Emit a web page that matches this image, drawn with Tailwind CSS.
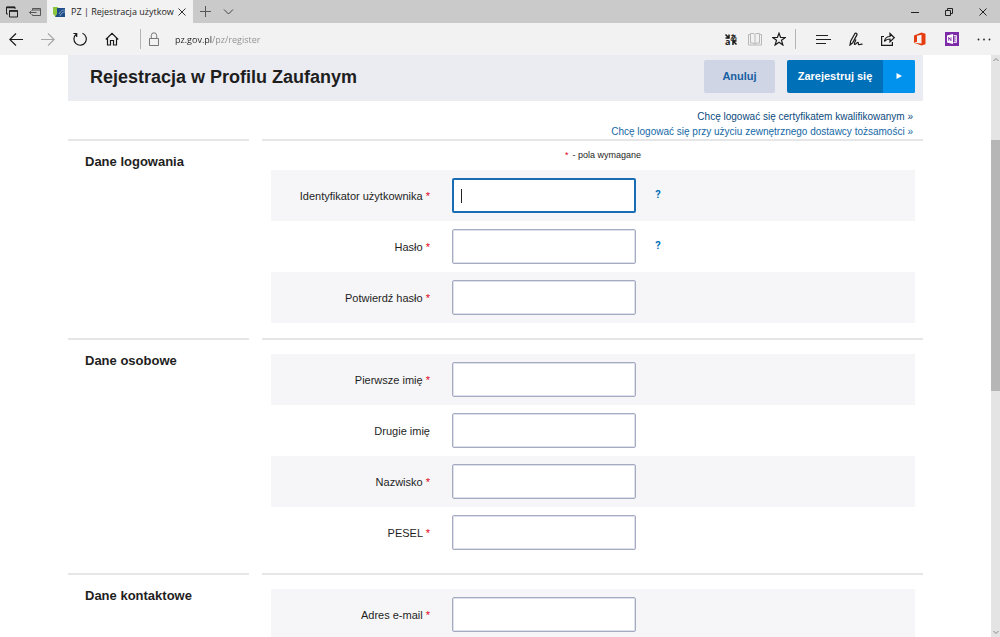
<!DOCTYPE html>
<html lang="pl">
<head>
    <meta charset="UTF-8">
    <meta name="viewport" content="width=device-width, initial-scale=1.0">
    <title>PZ | Rejestracja użytkownika</title>
    <script src="https://cdn.jsdelivr.net/npm/@tailwindcss/browser@4"></script>
</head>
<body class="h-screen flex flex-col overflow-hidden bg-white text-[#1e1e1e] font-['Liberation_Sans',Arial,sans-serif]">

<!-- Tab strip -->
<div class="h-[23px] shrink-0 flex items-stretch bg-[#cacaca] font-['Open_Sans','Noto_Sans',sans-serif]">
    <button class="w-[23px] flex items-center justify-center" aria-label="Odłożone karty">
        <svg class="w-3 h-3" viewBox="0 0 12 12" fill="none" stroke="#222"><path d="M2 8H.5V1h8.500v2"/><path d="M.5 1.500h8.500" stroke-width="1.500"/><path d="M3.500 4.500h8v6.500h-8z"/><path d="M3.500 5h8" stroke-width="1.700"/></svg>
    </button>
    <button class="w-6 flex items-center justify-center" aria-label="Odłóż karty">
        <svg class="w-3 h-3" viewBox="0 0 12 12" fill="none" stroke="#555"><path d="M3.500 4.500v-2h8v7h-8V8.500M3.500 4h8M.5 6.500h7M2.500 4.500l-2 2 2 2"/></svg>
    </button>
    <div class="w-[146px] flex items-center bg-[#f2f2f2] pl-1.5">
        <svg class="w-3 h-3 shrink-0" viewBox="0 0 12 12"><path d="M0 1h5v5L3 11 0 8z" fill="#8cc63e"/><path d="M4 2h8v9H2l2-3z" fill="#1f4e86"/><path d="M6 8c2-4 4-4 6-4M7 10c1-3 3-4 5-4" fill="none" stroke="#7ea3c8"/></svg>
        <span class="ml-1.5 w-[100px] whitespace-nowrap text-[9px] leading-4">PZ | Rejestracja użytkow</span>
        <button class="flex-1 h-full flex items-center justify-center" aria-label="Zamknij kartę">
            <svg class="w-2 h-2" viewBox="0 0 8 8" fill="none" stroke="#333"><path d="M.5.5l7 7M7.500.5l-7 7"/></svg>
        </button>
    </div>
    <button class="w-6 flex items-center justify-center" aria-label="Nowa karta">
        <svg class="w-[11px] h-[11px]" viewBox="0 0 11 11" fill="none" stroke="#555"><path d="M5.500 0v11M0 5.500h11"/></svg>
    </button>
    <button class="w-[23px] flex items-center justify-center" aria-label="Podgląd kart">
        <svg class="w-[11px] h-[11px]" viewBox="0 0 11 11" fill="none" stroke="#444"><path d="M1 3.500l4.500 4.500L10 3.500"/></svg>
    </button>
    <div class="flex-1"></div>
    <button class="w-[34px] flex items-center justify-center" aria-label="Minimalizuj">
        <svg class="w-2 h-2" viewBox="0 0 8 8" stroke="#222"><path d="M0 4.500h8"/></svg>
    </button>
    <button class="w-[34px] flex items-center justify-center" aria-label="Przywróć">
        <svg class="w-2 h-2" viewBox="0 0 8 8" fill="none" stroke="#222"><path d="M.5 2.500h5v5h-5zM2.500 2.500v-2h5v5h-2"/></svg>
    </button>
    <button class="w-[34px] flex items-center justify-center" aria-label="Zamknij">
        <svg class="w-2 h-2" viewBox="0 0 8 8" fill="none" stroke="#222"><path d="M.5.5l7 7M7.500.5l-7 7"/></svg>
    </button>
</div>

<!-- Toolbar -->
<div class="h-8 shrink-0 flex items-center bg-[#f2f2f2] font-['Open_Sans','Noto_Sans',sans-serif]">
    <button class="w-8 h-8 flex items-center justify-center" aria-label="Wstecz">
        <svg class="w-3.5 h-3.5" viewBox="0 0 14 14" fill="none" stroke="#1a1a1a" stroke-width="1.200"><path d="M14 7.500H.8M7 1.500l-6.200 6 6.200 6"/></svg>
    </button>
    <button class="w-8 h-8 flex items-center justify-center" aria-label="Dalej">
        <svg class="w-3.5 h-3.5" viewBox="0 0 14 14" fill="none" stroke="#a8a8a8" stroke-width="1.200"><path d="M0 7.500h13.200M7 1.500l6.200 6-6.200 6"/></svg>
    </button>
    <button class="w-8 h-8 flex items-center justify-center" aria-label="Odśwież">
        <svg class="w-3.5 h-3.5" viewBox="0 0 14 14" fill="none" stroke="#1a1a1a" stroke-width="1.200"><path d="M9.500 1.300A6.200 6.200 0 1 1 3.200 2.200M3.700 5V1.500H.4"/></svg>
    </button>
    <button class="w-8 h-8 flex items-center justify-center" aria-label="Strona główna">
        <svg class="w-3.5 h-3.5" viewBox="0 0 14 14" fill="none" stroke="#1a1a1a" stroke-width="1.200"><path d="M.8 7.500L7 1.300l6.200 6.200M2.500 6v7h3V8.500h3V13h3V6"/></svg>
    </button>
    <div class="w-px h-5 ml-3 bg-[#b5b5b5]"></div>
    <svg class="w-3.5 h-3.5 ml-1.5" viewBox="0 0 14 14" fill="none" stroke="#777"><path d="M2.500 6.500h9v7h-9zM4.300 6.500V3.500a2.700 2.700 0 0 1 5.400 0v3"/></svg>
    <input type="text" aria-label="Adres" value="pz.gov.pl/pz/register" class="ml-3.5 flex-1 min-w-0 h-6 text-[9px] outline-none text-transparent bg-clip-text bg-linear-to-r from-[#222] from-[37px] to-[#8c8c8c] to-[37px]">
    <button class="w-6 h-8 flex items-center justify-center" aria-label="Tłumacz">
        <svg class="w-3.5 h-3.5" viewBox="0 0 14 14" fill="none" stroke="#1a1a1a"><text x="1" y="13" font-size="9" font-weight="700" fill="#1a1a1a" stroke="none">a</text><text x="6" y="7.500" font-size="7" font-weight="700" font-family="Noto Sans CJK JP" fill="#1a1a1a" stroke="none">あ</text><path d="M1.500 2.500l3 3M5 2.500v3.500H1.500M12.500 12.500l-3-3M9 13V9h3.500" stroke-width="1.500"/></svg>
    </button>
    <button class="w-6 h-8 flex items-center justify-center" aria-label="Widok do czytania">
        <svg class="w-3.5 h-3.5" viewBox="0 0 14 14" fill="none" stroke="#b8b8b8"><path d="M7 2.500v10M2.500 1.500H5a2 2 0 0 1 2 1 2 2 0 0 1 2-1h2.500v9.500H9l-2 1-2-1H2.500zM2.500 2.500h-2v10.500h13V2.500h-2"/></svg>
    </button>
    <button class="w-6 h-8 flex items-center justify-center" aria-label="Dodaj do ulubionych">
        <svg class="w-3.5 h-3.5" viewBox="0 0 14 14" fill="none" stroke="#1a1a1a" stroke-width="1.200"><path d="M7 1.200l1.600 4.300h4.700L9.500 8.300l1.400 4.700L7 10.200 3.100 13l1.400-4.700L.7 5.500h4.700z"/></svg>
    </button>
    <div class="w-px h-5 ml-1 mr-3 bg-[#b5b5b5]"></div>
    <button class="w-8 h-8 flex items-center justify-center" aria-label="Centrum">
        <svg class="w-4 h-3.5" viewBox="0 0 16 14" fill="none" stroke="#222"><path d="M0 3.500h12M0 7.500h15M0 11.500h10"/></svg>
    </button>
    <button class="w-8 h-8 flex items-center justify-center" aria-label="Dodaj notatki">
        <svg class="w-3.5 h-3.5" viewBox="0 0 14 14" fill="none" stroke="#1a1a1a" stroke-width="1.200"><path d="M1 13l.6-3.800L5.800 1.700c.8-1.200 2.700-.2 2.100 1.200L3.700 10.800zM7 7.500c-1 2-1.800 4-1.500 4.800 1 .8 2.500-2.300 3.500-2 .9.300-.3 2 .8 2.300 1 .3 1.500-.8 3.700-.3"/></svg>
    </button>
    <button class="w-8 h-8 flex items-center justify-center" aria-label="Udostępnij">
        <svg class="w-3.5 h-3.5" viewBox="0 0 14 14" fill="none" stroke="#1a1a1a" stroke-width="1.200"><path d="M3 4.500H.6v8.900h10.800V10M3.500 9.500C4 6 6.500 4.500 9 4.500V1.500l4.300 4.200L9 9.800V7C6.500 7 5 7.500 3.500 9.500z"/></svg>
    </button>
    <button class="w-8 h-8 flex items-center justify-center" aria-label="Office">
        <svg class="w-3.5 h-3.5" viewBox="0 0 14 14"><path d="M1 3.500L8.500.5l4 1.200v10.600l-4 1.200L1 10.800l7.500.8V2.700L4 3.800v6L1 10.800z" fill="#e53c10"/></svg>
    </button>
    <button class="w-8 h-8 flex items-center justify-center" aria-label="OneNote">
        <svg class="w-3.5 h-3.5" viewBox="0 0 14 14"><path d="M0 0h14v14H0z" fill="#7d2ba8"/><path d="M2 3.500L8 2v10L2 10.500z" fill="#fff"/><path d="M8.500 3.500h3v7h-3M10 3.500v7M10 6h1.500M10 8.300h1.500" fill="none" stroke="#fff" stroke-width=".8"/><path d="M3.700 8.700V5.300l2.300 3.400V5.300" fill="none" stroke="#7d2ba8" stroke-width=".9"/></svg>
    </button>
    <button class="w-8 h-8 flex items-center justify-center" aria-label="Więcej">
        <svg class="w-3.5 h-3.5" viewBox="0 0 14 14" fill="#222"><circle cx="1.500" cy="7.500" r=".9"/><circle cx="7" cy="7.500" r=".9"/><circle cx="12.500" cy="7.500" r=".9"/></svg>
    </button>
</div>

<div class="flex-1 min-h-0 flex">
    <main class="flex-1 overflow-hidden">
        <form class="max-w-[855px] mx-auto">
            <!-- Page header -->
            <div class="h-[46px] flex items-center bg-[#ebecf1] pl-[22px] pr-2 pb-1">
                <h1 class="flex-1 pt-0.5 text-[18px] leading-6 font-bold">Rejestracja w Profilu Zaufanym</h1>
                <button type="button" class="w-[71px] h-[33px] mr-3 rounded-xs bg-[#cfd5e4] text-[#1760a2] text-[11px] font-bold">Anuluj</button>
                <button type="submit" class="w-32 h-[33px] flex items-stretch rounded-xs overflow-hidden bg-[#0070b8] text-white text-[11px] font-bold">
                    <span class="flex-1 flex items-center justify-center">Zarejestruj się</span>
                    <span class="w-8 flex items-center justify-center bg-[#0092ec]">
                        <svg class="w-1.5 h-1.5" viewBox="0 0 6 6" fill="#fff"><path d="M.5 0L6 3 .5 6z"/></svg>
                    </span>
                </button>
            </div>

            <div class="flex flex-col items-end pt-2 pr-2.5 text-[10px] leading-[15px]">
                <a href="#" class="text-[#0b4a80]">Chcę logować się certyfikatem kwalifikowanym »</a>
                <a href="#" class="text-[#1368a6]">Chcę logować się przy użyciu zewnętrznego dostawcy tożsamości »</a>
            </div>

            <!-- Dane logowania -->
            <section class="grid grid-cols-[181px_1fr] gap-x-[13px]">
                <h2 class="border-t-2 border-[#e6e6e8] pt-[11px] pl-[17px] text-[13px] leading-5 font-bold">Dane logowania</h2>
                <div class="border-t-2 border-[#e6e6e8] pl-[9px] pr-2 pb-[15px]">
                    <p class="h-[29px] flex items-center pl-[294px] text-[9px]"><span class="text-[#e2001a] mr-1">*</span>- pola wymagane</p>
                    <div class="h-[51px] flex items-center bg-[#f6f6f8]">
                        <label for="login" class="w-[159px] mr-[22px] pt-0.5 text-right text-[11px]">Identyfikator użytkownika <span class="text-[#e2001a]">*</span></label>
                        <div class="relative">
                            <input id="login" type="text" class="block w-[184px] h-[35px] px-2 border-2 border-[#1a6cb4] rounded-xs bg-white text-[11px] outline-none">
                            <span class="absolute left-[9px] top-[11px] w-px h-3.5 bg-[#222]"></span>
                        </div>
                        <button type="button" class="w-4 ml-3.5 text-[11px] font-bold text-[#0070b8] font-['Roboto',sans-serif]">?</button>
                    </div>
                    <div class="h-[51px] flex items-center">
                        <label for="haslo" class="w-[159px] mr-[22px] pt-0.5 text-right text-[11px]">Hasło <span class="text-[#e2001a]">*</span></label>
                        <input id="haslo" type="password" class="w-[184px] h-[35px] px-2 border border-[#a6abc4] inset-ring inset-ring-[#dfe1ea] rounded-xs bg-white text-[11px]">
                        <button type="button" class="w-4 ml-3.5 text-[11px] font-bold text-[#0070b8] font-['Roboto',sans-serif]">?</button>
                    </div>
                    <div class="h-[51px] flex items-center bg-[#f6f6f8]">
                        <label for="haslo2" class="w-[159px] mr-[22px] pt-0.5 text-right text-[11px]">Potwierdź hasło <span class="text-[#e2001a]">*</span></label>
                        <input id="haslo2" type="password" class="w-[184px] h-[35px] px-2 border border-[#a6abc4] inset-ring inset-ring-[#dfe1ea] rounded-xs bg-white text-[11px]">
                    </div>
                </div>
            </section>

            <!-- Dane osobowe -->
            <section class="grid grid-cols-[181px_1fr] gap-x-[13px]">
                <h2 class="border-t-2 border-[#e6e6e8] pt-[11px] pl-[17px] text-[13px] leading-5 font-bold">Dane osobowe</h2>
                <div class="border-t-2 border-[#e6e6e8] pl-[9px] pr-2 pt-3.5 pb-[15px]">
                    <div class="h-[51px] flex items-center bg-[#f6f6f8]">
                        <label for="imie" class="w-[159px] mr-[22px] pt-0.5 text-right text-[11px]">Pierwsze imię <span class="text-[#e2001a]">*</span></label>
                        <input id="imie" type="text" class="w-[184px] h-[35px] px-2 border border-[#a6abc4] inset-ring inset-ring-[#dfe1ea] rounded-xs bg-white text-[11px]">
                    </div>
                    <div class="h-[51px] flex items-center">
                        <label for="imie2" class="w-[159px] mr-[22px] pt-0.5 text-right text-[11px]">Drugie imię</label>
                        <input id="imie2" type="text" class="w-[184px] h-[35px] px-2 border border-[#a6abc4] inset-ring inset-ring-[#dfe1ea] rounded-xs bg-white text-[11px]">
                    </div>
                    <div class="h-[51px] flex items-center bg-[#f6f6f8]">
                        <label for="nazwisko" class="w-[159px] mr-[22px] pt-0.5 text-right text-[11px]">Nazwisko <span class="text-[#e2001a]">*</span></label>
                        <input id="nazwisko" type="text" class="w-[184px] h-[35px] px-2 border border-[#a6abc4] inset-ring inset-ring-[#dfe1ea] rounded-xs bg-white text-[11px]">
                    </div>
                    <div class="h-[51px] flex items-center">
                        <label for="pesel" class="w-[159px] mr-[22px] pt-0.5 text-right text-[11px]">PESEL <span class="text-[#e2001a]">*</span></label>
                        <input id="pesel" type="text" class="w-[184px] h-[35px] px-2 border border-[#a6abc4] inset-ring inset-ring-[#dfe1ea] rounded-xs bg-white text-[11px]">
                    </div>
                </div>
            </section>

            <!-- Dane kontaktowe -->
            <section class="grid grid-cols-[181px_1fr] gap-x-[13px]">
                <h2 class="border-t-2 border-[#e6e6e8] pt-[11px] pl-[17px] text-[13px] leading-5 font-bold">Dane kontaktowe</h2>
                <div class="border-t-2 border-[#e6e6e8] pl-[9px] pr-2 pt-3.5">
                    <div class="h-[51px] flex items-center bg-[#f6f6f8]">
                        <label for="email" class="w-[159px] mr-[22px] pt-0.5 text-right text-[11px]">Adres e-mail <span class="text-[#e2001a]">*</span></label>
                        <input id="email" type="email" class="w-[184px] h-[35px] px-2 border border-[#a6abc4] inset-ring inset-ring-[#dfe1ea] rounded-xs bg-white text-[11px]">
                    </div>
                </div>
            </section>
        </form>
    </main>

    <!-- Scrollbar -->
    <div class="w-[9px] flex flex-col items-center bg-[#e4e4e4]">
        <svg class="w-1.5 h-2.5 shrink-0" viewBox="0 0 6 10" fill="none" stroke="#888"><path d="M.5 6L3 3.500 5.500 6"/></svg>
        <div class="flex-[75]"></div>
        <div class="flex-[251] w-full bg-[#b6b6b6]"></div>
        <div class="flex-[236]"></div>
        <svg class="w-1.5 h-2.5 shrink-0" viewBox="0 0 6 10" fill="none" stroke="#888"><path d="M.5 4L3 6.500 5.500 4"/></svg>
    </div>
</div>

</body>
</html>
